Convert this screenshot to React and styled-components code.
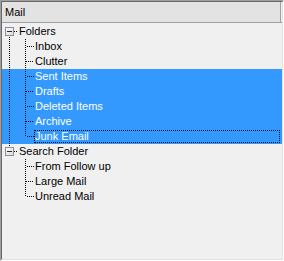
import styled, { createGlobalStyle } from "styled-components"

const GlobalStyle = createGlobalStyle`
    html, body {
        margin: 0;
        padding: 0;
        background: #f0f0f0;
    }
`

const ROW_H = 15

const tree = [
    {
        label: "Folders",
        children: [
            { label: "Inbox" },
            { label: "Clutter" },
            { label: "Sent Items", selected: true },
            { label: "Drafts", selected: true },
            { label: "Deleted Items", selected: true },
            { label: "Archive", selected: true },
            { label: "Junk Email", selected: true, focused: true },
        ],
    },
    {
        label: "Search Folder",
        children: [
            { label: "From Follow up" },
            { label: "Large Mail" },
            { label: "Unread Mail" },
        ],
    },
]

// dotted segment drawn pixel by pixel so the dots stay on a fixed grid
const Dots = ({ x1, y1, x2, y2, phase }) => {
    const dots = []
    if (x1 === x2) {
        for (let y = y1; y <= y2; y++) {
            if ((y + phase) % 2 === 0) dots.push(<rect key={y} x={x1} y={y} width="1" height="1" />)
        }
    } else {
        for (let x = x1; x <= x2; x++) {
            if ((x + y1 + phase) % 2 === 0) dots.push(<rect key={x} x={x} y={y1} width="1" height="1" />)
        }
    }
    return dots
}

// one 16px gutter cell of the tree: pipe, branch, box or blank
const Connector = ({ kind, phase, first, hasBelow, last }) => {
    return (
        <Cell width="16" height={ROW_H} viewBox={`0 0 16 ${ROW_H}`}>
            <g fill="#000">
                {kind === "pipe" && <Dots x1={7} y1={0} x2={7} y2={ROW_H - 1} phase={phase} />}
                {kind === "branch" && (
                    <>
                        <Dots x1={7} y1={0} x2={7} y2={last ? 7 : ROW_H - 1} phase={phase} />
                        <Dots x1={8} y1={7} x2={15} y2={7} phase={phase} />
                    </>
                )}
                {kind === "box" && (
                    <>
                        <Dots x1={12} y1={7} x2={15} y2={7} phase={phase} />
                        {hasBelow && <Dots x1={7} y1={12} x2={7} y2={ROW_H - 1} phase={phase} />}
                        {!first && <Dots x1={7} y1={0} x2={7} y2={2} phase={phase} />}
                    </>
                )}
            </g>
            {kind === "box" && (
                <>
                    <defs>
                        <linearGradient id="boxfill" x1="0" y1="0" x2="1" y2="1">
                            <stop offset="0" stopColor="#ffffff" />
                            <stop offset="1" stopColor="#d8d8d8" />
                        </linearGradient>
                    </defs>
                    <rect x="3.5" y="3.5" width="8" height="8" fill="url(#boxfill)" stroke="#8e8f8f" />
                    <rect x="5" y="7" width="5" height="1" fill="#1b2b5a" />
                </>
            )}
        </Cell>
    )
}

const MailTree = () => {
    const rows = []
    let index = 0
    tree.forEach((group, gi) => {
        const lastGroup = gi === tree.length - 1
        rows.push(
            <Row key={group.label}>
                <Connector kind="box" phase={(index * ROW_H + 1) % 2} hasBelow={!lastGroup} first={gi === 0} />
                <Label>{group.label}</Label>
            </Row>
        )
        index++
        group.children.forEach((child, ci) => {
            const lastChild = ci === group.children.length - 1
            const phase = (index * ROW_H + 1) % 2
            rows.push(
                <Row key={child.label} $selected={child.selected}>
                    <Connector kind={lastGroup ? "blank" : "pipe"} phase={phase} />
                    <Connector kind="branch" phase={phase} last={lastChild} />
                    <Label $selected={child.selected} $focused={child.focused}>{child.label}</Label>
                </Row>
            )
            index++
        })
    })
    return <Tree>{rows}</Tree>
}

const App = () => {
    return (
        <>
            <GlobalStyle />
            <Frame>
                <Inner>
                    <Header>
                        <Column>Mail</Column>
                        <Filler />
                    </Header>
                    <MailTree />
                </Inner>
            </Frame>
        </>
    )
}

const Frame = styled.div`
    box-sizing: border-box;
    width: 284px;
    height: 261px;
    border: 1px solid;
    border-color: #a0a0a0 #ffffff #ffffff #a0a0a0;
`

const Inner = styled.div`
    box-sizing: border-box;
    height: 100%;
    border: 1px solid;
    border-color: #696969 #e3e3e3 #e3e3e3 #696969;
    background: #f0f0f0;
    display: flex;
    flex-direction: column;
    font-family: "Liberation Sans", Arial, sans-serif;
    font-size: 11px;
    color: #000;
`

const Header = styled.div`
    display: flex;
    height: 21px;
    flex-shrink: 0;
`

const Column = styled.div`
    box-sizing: border-box;
    width: 279px;
    display: flex;
    align-items: center;
    padding-left: 3px;
    background: #e3e3e3;
    border-bottom: 1px solid #a0a0a0;
    border-right: 1px solid #a0a0a0;
    color: #000;
`

const Filler = styled.div`
    flex: 1;
    border-bottom: 1px solid #a0a0a0;
    background: #f0f0f0;
`

const Tree = styled.div`
    display: flex;
    flex-direction: column;
    padding-top: 1px;
`

const Row = styled.div`
    display: flex;
    align-items: center;
    height: ${ROW_H}px;
    background: ${(p) => (p.$selected ? "#3399ff" : "transparent")};
`

const Cell = styled.svg`
    display: block;
    flex-shrink: 0;
    shape-rendering: crispEdges;
`

const Label = styled.span`
    box-sizing: border-box;
    flex: ${(p) => (p.$focused ? 1 : "0 0 auto")};
    height: 13px;
    line-height: 12px;
    margin-right: 2px;
    padding: 0 1px 0 1px;
    white-space: nowrap;
    color: ${(p) => (p.$selected ? "#ffffff" : "#000")};
    outline: ${(p) => (p.$focused ? "1px dotted #000" : "none")};
    outline-offset: -1px;
`

export default App
